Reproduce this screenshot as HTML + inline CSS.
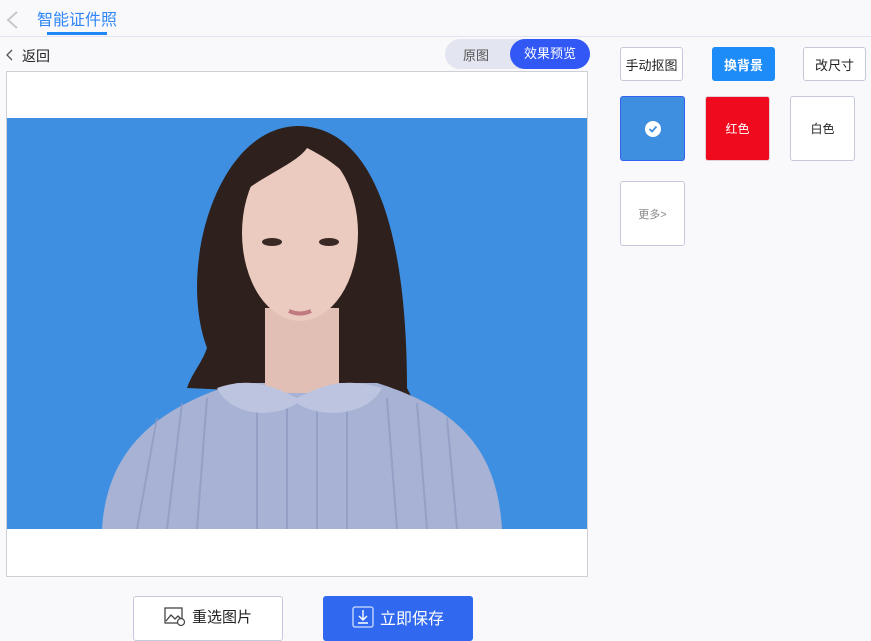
<!DOCTYPE html>
<html><head><meta charset="utf-8"><style>
body{margin:0;width:871px;height:635px;background:#f9f9fc;font-family:"Liberation Sans","Noto Sans CJK SC",sans-serif;position:relative;overflow:hidden}
.a{position:absolute}
.btn{position:absolute;box-sizing:border-box;border:1px solid #c6c8dc;border-radius:3px;background:#fff;font-size:14px;color:#222;display:flex;align-items:center;justify-content:center}
</style></head><body>
<div class="a" style="left:0;top:36px;width:871px;height:1px;background:#e2e3ee"></div>
<svg class="a" style="left:5px;top:10px" width="14" height="20"><path d="M12 2 L3 10 L12 18" fill="none" stroke="#c8c8c8" stroke-width="2"/></svg>
<div class="a" style="left:37px;top:6px;font-size:16px;color:#2f86f6">智能证件照</div>
<div class="a" style="left:47px;top:32px;width:60px;height:3px;background:#1f86f5"></div>
<svg class="a" style="left:5px;top:48px" width="10" height="14"><path d="M7 2 L2 7 L7 12" fill="none" stroke="#555" stroke-width="1.3"/></svg>
<div class="a" style="left:22px;top:46px;font-size:14px;color:#222">返回</div>
<div class="a" style="left:445px;top:39px;width:145px;height:30px;border-radius:15px;background:#e3e5f0"></div>
<div class="a" style="left:463px;top:45px;font-size:13px;color:#555">原图</div>
<div class="a" style="left:510px;top:39px;width:80px;height:30px;border-radius:15px;background:#3158f5;color:#fff;font-size:13px;text-align:center;line-height:30px">效果预览</div>
<div class="a" style="left:6px;top:71px;width:580px;height:504px;border:1px solid #cfcfd6;background:#fff"></div>
<svg class="a" style="left:7px;top:118px" width="580" height="411">
<rect width="580" height="411" fill="#3e8fe1"/>
<path d="M200 230 C170 150 210 10 290 8 C380 8 400 150 400 270 L405 280 L180 270 C185 255 195 245 200 230Z" fill="#2e201c"/>
<path d="M95 411 C100 330 150 290 230 265 L370 265 C450 290 490 330 495 411Z" fill="#a7b2d4"/>
<g stroke="#8d99c0" stroke-width="2" opacity=".7"><path d="M130 411 L150 300 M160 411 L175 285 M190 411 L200 280 M390 411 L380 280 M420 411 L410 285 M450 411 L440 300 M250 411 L250 290 M280 411 L280 290 M310 411 L310 290 M340 411 L340 290"/></g>
<rect x="258" y="190" width="74" height="85" fill="#e2bfb4"/>
<path d="M210 270 C240 260 260 265 290 280 C320 265 340 260 375 270 C360 300 310 300 290 285 C270 300 225 300 210 270Z" fill="#bcc4e0"/>
<ellipse cx="293" cy="115" rx="58" ry="88" fill="#ebcbbf"/>
<path d="M228 80 C230 30 260 15 292 15 C330 15 358 35 358 85 C345 55 320 40 300 30 C290 45 260 55 228 80Z" fill="#2e201c"/>
<ellipse cx="265" cy="124" rx="10" ry="4" fill="#3a2824"/>
<ellipse cx="322" cy="124" rx="10" ry="4" fill="#3a2824"/>
<path d="M282 193 Q293 198 304 193" stroke="#c07a80" stroke-width="4" fill="none"/>
</svg>
<div class="btn" style="left:620px;top:47px;width:63px;height:34px;font-size:13px">手动抠图</div>
<div class="btn" style="left:712px;top:47px;width:63px;height:34px;background:#1d8cf8;border-color:#1d8cf8;color:#fff;font-weight:bold;font-size:13px">换背景</div>
<div class="btn" style="left:803px;top:47px;width:63px;height:34px;font-size:13px">改尺寸</div>
<div class="btn" style="left:620px;top:96px;width:65px;height:65px;background:#3f8fe0;border-color:#3461f0"><svg width="16" height="16"><circle cx="8" cy="8" r="8" fill="#fff"/><path d="M4.5 8 L7 10.5 L11.5 5.5" stroke="#3f8fe0" stroke-width="1.8" fill="none"/></svg></div>
<div class="btn" style="left:705px;top:96px;width:65px;height:65px;background:#ef0a1e;border-color:#e0d0d8;color:#fff;font-size:12px">红色</div>
<div class="btn" style="left:790px;top:96px;width:65px;height:65px;font-size:12px">白色</div>
<div class="btn" style="left:620px;top:181px;width:65px;height:65px;font-size:11px;color:#888">更多&gt;</div>
<div class="btn" style="left:133px;top:596px;width:150px;height:45px;font-size:15px;padding-bottom:4px"><svg width="22" height="20" style="margin-right:6px"><rect x="1" y="1" width="17" height="15" fill="none" stroke="#444" stroke-width="1.3"/><path d="M2 14 L7 8 L11 12 L14 9 L18 13" fill="none" stroke="#444" stroke-width="1.3"/><circle cx="17" cy="15" r="3.5" fill="#fff" stroke="#444" stroke-width="1.2"/></svg>重选图片</div>
<div class="a" style="left:323px;top:596px;width:150px;height:45px;border-radius:3px;background:#3069ef;color:#fff;font-size:16px;display:flex;align-items:center;justify-content:center;box-sizing:border-box;padding-bottom:4px"><svg width="22" height="22" style="margin-right:6px"><rect x="1" y="1" width="20" height="20" rx="2" fill="none" stroke="#cfe0ff" stroke-width="1.3"/><path d="M11 4 L11 14 M7 10 L11 14 L15 10 M6 17 L16 17" fill="none" stroke="#fff" stroke-width="1.4"/></svg>立即保存</div>
</body></html>
